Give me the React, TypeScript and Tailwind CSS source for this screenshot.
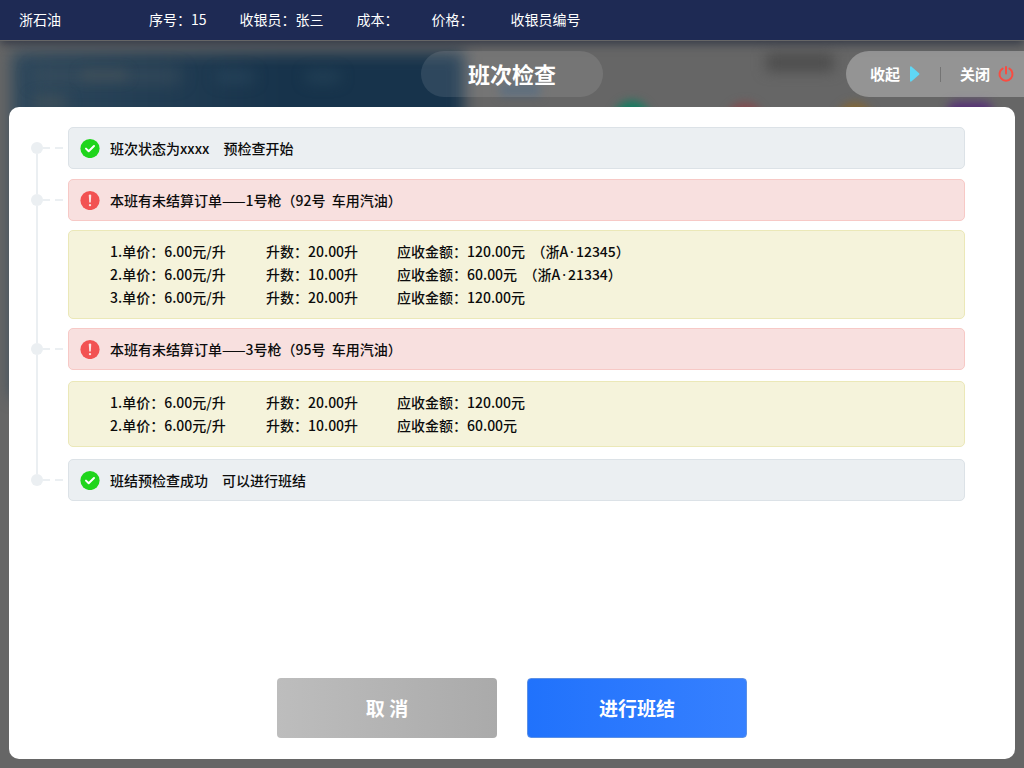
import React from "react";

type Order = { price: string; litres: string; amount: string; plate?: [string, string] };
type Entry = {
  kind: "ok" | "warn";
  title: string;
  spacing: string;
  orders?: Order[];
};

const entries: Entry[] = [
  { kind: "ok", title: "班次状态为xxxx\u3000预检查开始", spacing: "gap-2.5 mb-2.5" },
  {
    kind: "warn",
    title: "本班有未结算订单——1号枪（92号  车用汽油）",
    spacing: "gap-[9px] mb-[9px]",
    orders: [
      { price: "6.00元/升", litres: "20.00升", amount: "120.00元", plate: ["浙A", "12345"] },
      { price: "6.00元/升", litres: "10.00升", amount: "60.00元", plate: ["浙A", "21334"] },
      { price: "6.00元/升", litres: "20.00升", amount: "120.00元" },
    ],
  },
  {
    kind: "warn",
    title: "本班有未结算订单——3号枪（95号  车用汽油）",
    spacing: "gap-[11px] mb-3",
    orders: [
      { price: "6.00元/升", litres: "20.00升", amount: "120.00元" },
      { price: "6.00元/升", litres: "10.00升", amount: "60.00元" },
    ],
  },
  { kind: "ok", title: "班结预检查成功\u3000可以进行班结", spacing: "gap-2.5" },
];

function StatusIcon({ kind }: { kind: "ok" | "warn" }) {
  return kind === "ok" ? (
    <svg className="size-5 shrink-0" viewBox="0 0 20 20" aria-hidden="true">
      <circle cx="10" cy="10.5" r="9.6" fill="#1fd51c" />
      <path d="M6 10.6 8.7 13.2l5.3-5.2" fill="none" stroke="#fff" strokeWidth="2" strokeLinecap="round" strokeLinejoin="round" />
    </svg>
  ) : (
    <svg className="size-5 shrink-0" viewBox="0 0 20 20" aria-hidden="true">
      <circle cx="10" cy="10.5" r="9.6" fill="#f25252" />
      <path d="M8.8 5.6q0-1 1.2-1t1.2 1l-.4 7H9.2z" fill="#fde3e3" />
      <circle cx="10" cy="15.1" r="1.2" fill="#fde3e3" />
    </svg>
  );
}

function Marker({ first, last }: { first: boolean; last: boolean }) {
  return (
    <div className="flex h-[42px] items-center">
      <div className="flex w-3 flex-col items-center self-stretch">
        <span className={first ? "w-0.5 flex-1" : "w-0.5 flex-1 bg-[#ebeff2]"} />
        <span className="size-3 rounded-full bg-[#ebeff2]" />
        <span className={last ? "w-0.5 flex-1" : "w-0.5 flex-1 bg-[#ebeff2]"} />
      </div>
      <span className="h-0.5 w-[7px] bg-[#ebeff2]" />
      <span className="ml-[5px] h-0.5 w-2 bg-[#ebeff2]" />
    </div>
  );
}

function Backdrop() {
  return (
    <div className="absolute inset-0 overflow-hidden bg-[#666666]" aria-hidden="true">
      <div className="absolute top-[52px] left-3 h-[345px] w-[452px] bg-linear-to-r from-[#2e485c] via-[#17334b] via-60% to-[#17334b] blur-[8px]" />
      <div className="absolute top-[68px] left-8 h-4 w-[150px] rounded-full bg-[#3e505d]/60 blur-[8px]" />
      <div className="absolute top-[70px] left-20 h-2.5 w-12 rounded-full bg-[#4a555a]/60 blur-[6px]" />
      <div className="absolute top-[71px] left-[215px] h-3 w-10 rounded-full bg-[#2c4a5f]/60 blur-[7px]" />
      <div className="absolute top-[71px] left-[305px] h-3 w-9 rounded-full bg-[#2a475c]/60 blur-[7px]" />
      <div className="absolute top-[96px] left-8 h-3 w-9 rounded-full bg-[#4a555a]/70 blur-[7px]" />
      <div className="absolute top-[84px] left-[500px] h-3 w-10 bg-[#4c5f72] blur-[5px]" />
      <div className="absolute top-[54px] left-[766px] h-[17px] w-[68px] bg-[#454545]/80 blur-[7px]" />
      <div className="absolute top-[101px] left-[614px] size-9 rounded-full bg-[#127c60] blur-[5px]" />
      <div className="absolute top-[103px] left-[727px] size-9 rounded-full bg-[#86474b] blur-[5px]" />
      <div className="absolute top-[103px] left-[837px] size-9 rounded-full bg-[#86662f] blur-[5px]" />
      <div className="absolute top-[102px] left-[948px] h-9 w-11 rounded-lg bg-[#552e77] blur-[5px]" />
    </div>
  );
}

export default function App() {
  return (
    <div className="relative flex min-h-screen flex-col font-['Noto_Sans_CJK_SC',sans-serif] text-sm">
      <Backdrop />
      <header className="relative flex h-[41px] items-center gap-[33px] border-b border-[#666] bg-[#1e2a54] pb-0.5 pl-[19px] whitespace-nowrap text-white shadow-[0_3px_9px_rgba(20,28,50,0.6)]">
        <span className="mr-[55px]">浙石油</span>
        <span>序号：15</span>
        <span>收银员：张三</span>
        <span>成本：</span>
        <span>价格：</span>
        <span className="ml-1">收银员编号</span>
      </header>

      <div className="relative grid grid-cols-[1fr_auto_1fr] items-center py-2.5 text-white">
        <h1 className="col-start-2 flex h-[46px] w-[182px] items-center justify-center rounded-full bg-white/10 text-[22px] font-bold">
          班次检查
        </h1>
        <div className="flex h-[46px] items-center justify-self-end rounded-l-full bg-white/30 pr-2.5 pl-6 text-[15px] font-bold">
          <button type="button" className="flex items-center gap-2.5">
            收起
            <svg className="h-4 w-2.5" viewBox="0 0 10 16" aria-hidden="true">
              <path d="M0 1.2C0 .3 1 .1 1.6.7l7.5 6.5c.5.5.5 1.1 0 1.6l-7.5 6.5c-.6.6-1.6.4-1.6-.5z" fill="#5fd7f5" />
            </svg>
          </button>
          <span className="mr-[19px] ml-5 h-[15px] w-px bg-[#747474]" />
          <button type="button" className="flex items-center gap-2">
            关闭
            <svg className="size-4" viewBox="0 0 16 16" fill="none" stroke="#fa4b40" strokeWidth="2" strokeLinecap="round" aria-hidden="true">
              <path d="M8 1v6.4M4.6 2.6a6.5 6.5 0 1 0 6.8 0" />
            </svg>
          </button>
        </div>
      </div>

      <main className="relative mx-[9px] mb-[9px] flex flex-1 flex-col rounded-[10px] bg-white pt-5 pr-[50px] pb-[21px] pl-[22px] text-[#0c0c0c]">
        <ol className="flex flex-col font-medium">
          {entries.map((entry, i) => {
            const first = i === 0;
            const last = i === entries.length - 1;
            return (
              <li key={i} className="flex gap-[5px]">
                <div className="flex w-8 shrink-0 flex-col">
                  <Marker first={first} last={last} />
                  {!last && <span className="ml-[5px] w-0.5 flex-1 bg-[#ebeff2]" />}
                </div>
                <div className={"flex min-w-0 flex-1 flex-col " + entry.spacing}>
                  <div
                    className={
                      "flex h-[42px] items-center gap-2.5 rounded-[5px] border pl-[11px] whitespace-pre " +
                      (entry.kind === "ok" ? "border-[#dce2e7] bg-[#ebeff2]" : "border-[#f7c9c6] bg-[#f8e0df]")
                    }
                  >
                    <StatusIcon kind={entry.kind} />
                    <span>{entry.title}</span>
                  </div>
                  {entry.orders && (
                    <ul className="rounded-[5px] border border-[#ebe8b8] bg-[#f5f3db] py-[9px] pl-[41px] leading-[23px] whitespace-pre">
                      {entry.orders.map((o, n) => (
                        <li key={n} className="grid grid-cols-[156px_131px_auto]">
                          <span>{n + 1}.单价：{o.price}</span>
                          <span>升数：{o.litres}</span>
                          <span>
                            应收金额：{o.amount}
                            {o.plate && (
                              <>
                                {"  "}（{o.plate[0]}
                                <span className="px-0.5 font-['Noto_Sans',sans-serif]">·</span>
                                {o.plate[1]}）
                              </>
                            )}
                          </span>
                        </li>
                      ))}
                    </ul>
                  )}
                </div>
              </li>
            );
          })}
        </ol>
        <div className="mt-auto flex justify-center gap-[30px] pl-7 text-[19px] font-bold text-white">
          <button type="button" className="h-[60px] w-[220px] rounded bg-linear-to-r from-[#bdbdbd] to-[#aaaaaa]">
            取 消
          </button>
          <button type="button" className="h-[60px] w-[220px] rounded border border-[#5b90e6] bg-linear-to-r from-[#2072fc] to-[#3680ff]">
            进行班结
          </button>
        </div>
      </main>
    </div>
  );
}
